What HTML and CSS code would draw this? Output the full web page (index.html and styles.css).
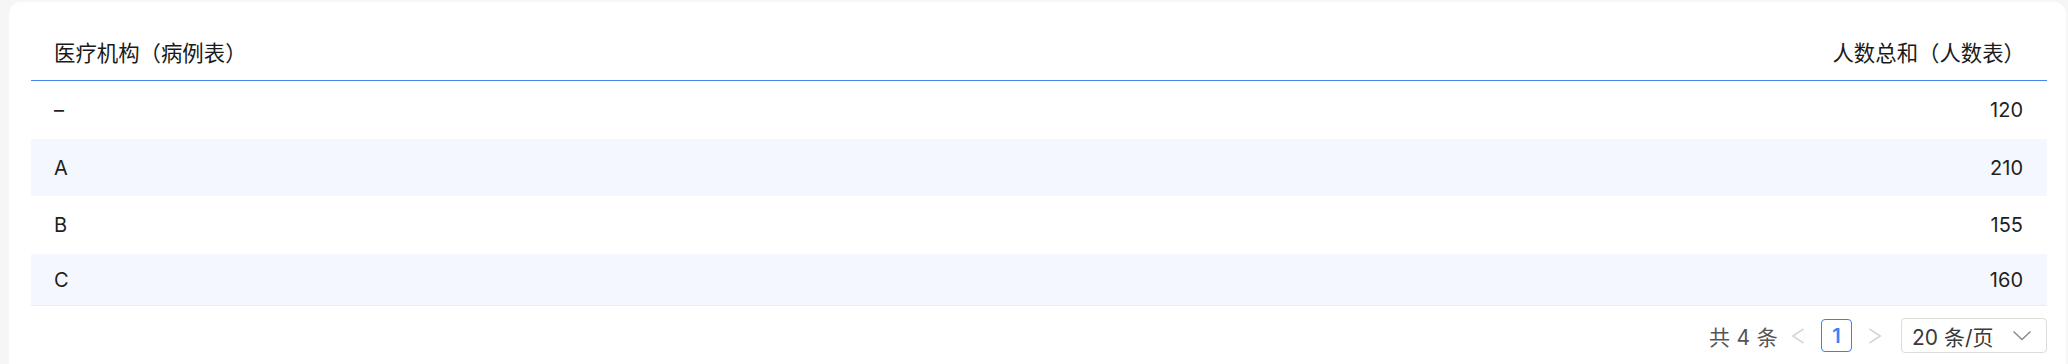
FILE: index.html
```html
<!DOCTYPE html>
<html lang="zh-CN">
<head>
<meta charset="utf-8">
<link rel="stylesheet" href="styles.css">
</head>
<body>
<div class="card">
  <div class="table">
    <div class="row head">
      <span>医疗机构（病例表）</span>
      <span>人数总和（人数表）</span>
    </div>
    <div class="row r1"><span>–</span><span>120</span></div>
    <div class="row r2 alt"><span>A</span><span>210</span></div>
    <div class="row r3"><span>B</span><span>155</span></div>
    <div class="row r4 alt last"><span>C</span><span>160</span></div>
  </div>
  <div class="pager">
    <span class="total">共 4 条</span>
    <span class="arrow prev">
      <svg width="14" height="16" viewBox="0 0 14 16"><path d="M12.5 1 L1.8 8 L12.5 15" fill="none" stroke="#d6d6d6" stroke-width="1.6"/></svg>
    </span>
    <span class="page">1</span>
    <span class="arrow next">
      <svg width="14" height="16" viewBox="0 0 14 16"><path d="M1.5 1 L12.2 8 L1.5 15" fill="none" stroke="#d6d6d6" stroke-width="1.6"/></svg>
    </span>
    <span class="select">
      <span class="sel-text">20 条/页</span>
      <svg class="chev" width="20" height="11" viewBox="0 0 20 11"><path d="M1.5 1.5 L10 9.5 L18.5 1.5" fill="none" stroke="#8a8a8a" stroke-width="1.5"/></svg>
    </span>
  </div>
</div>
</body>
</html>
```

FILE: styles.css
```css
html, body {
  margin: 0;
  padding: 0;
}
body {
  background: #f6f6f7;
  font-family: "Inter", "Noto Sans CJK SC", sans-serif;
  font-size: 20px;
  color: #1f1f1f;
  width: 2068px;
  height: 364px;
  overflow: hidden;
}
.card {
  margin: 2px 2px 0 9px;
  height: 362px;
  box-sizing: border-box;
  background: #ffffff;
  border-radius: 12px 12px 0 0;
  padding: 20px 19px 0 22px;
}
.table {
  display: flex;
  flex-direction: column;
}
.row {
  display: flex;
  justify-content: space-between;
  align-items: center;
  box-sizing: border-box;
  padding: 0 24px 0 23px;
  height: 58px;
}
.head {
  height: 59px;
  border-bottom: 1px solid #4584f6;
  color: #1a1a1a;
  font-size: 21.4px;
  padding-right: 22px;
}
.r2 { height: 57px; }
.r4 { height: 52px; }
.alt { background: #f4f7fe; }
.last { border-bottom: 1px solid #e9eef6; }
.pager {
  display: flex;
  justify-content: flex-end;
  align-items: center;
  margin-top: 12px;
  height: 35px;
  font-size: 21px;
}
.total {
  color: #555555;
  margin-right: 8px;
  letter-spacing: 0.3px;
}
.arrow {
  display: flex;
  align-items: center;
  justify-content: center;
  width: 24px;
  height: 33px;
}
.prev { margin-right: 11px; }
.next { margin-left: 11px; margin-right: 14px; }
.page {
  box-sizing: border-box;
  width: 31px;
  height: 33px;
  border: 1px solid #3d7ff6;
  border-radius: 4px;
  color: #3d7ff6;
  display: flex;
  align-items: center;
  justify-content: center;
  font-size: 20px;
  font-weight: 600;
}
.select {
  box-sizing: border-box;
  width: 146px;
  height: 35px;
  border: 1px solid #dcdcdc;
  border-radius: 4px;
  display: flex;
  align-items: center;
  justify-content: space-between;
  padding: 0 14px 0 10px;
  color: #3a3a3a;
}
.chev { display: block; }
```
